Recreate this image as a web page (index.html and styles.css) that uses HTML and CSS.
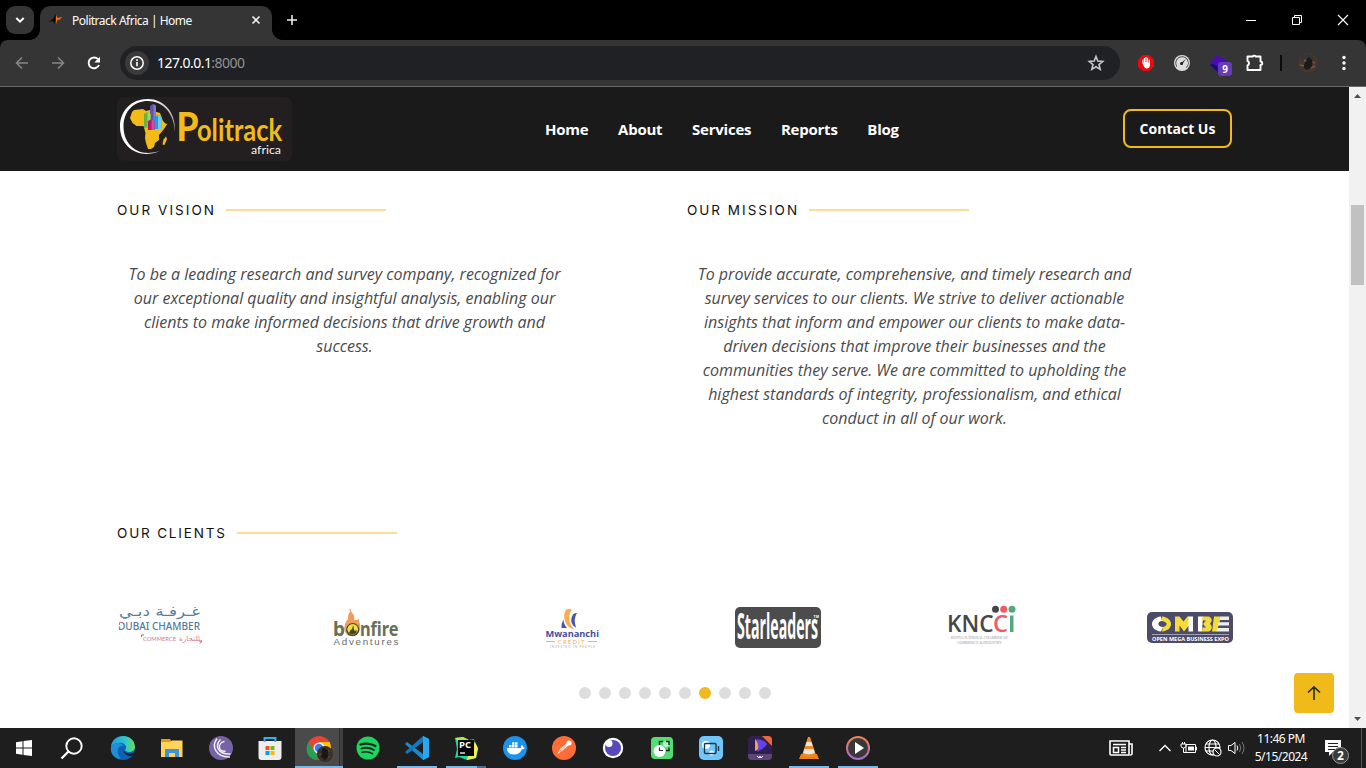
FILE: index.html
```html
<!DOCTYPE html>
<html lang="en">
<head>
<meta charset="utf-8">
<title>Politrack Africa | Home</title>
<link rel="stylesheet" href="styles.css">
</head>
<body>
<div class="tabstrip">
  <div class="tab-search"><svg width="28" height="28" viewBox="0 0 28 28"><path d="M10.3 12l3.7 3.7 3.7-3.7" fill="none" stroke="#fff" stroke-width="2"/></svg></div>
  <div class="tab">
    <svg class="favicon" width="16" height="16" viewBox="0 0 16 16"><path d="M0 10l5-3 2.500-5v6l-1.500 4-1-3z" fill="#0b0b0b"/><path d="M8 12V3l1.500 3L14.500 5l-3.500 3-1.500-.5z" fill="#f37021"/></svg>
    <span class="tab-title">Politrack Africa | Home</span>
    <svg class="tab-close" width="10" height="10" viewBox="0 0 10 10"><path d="M1.500 1.500l7 7M8.500 1.500l-7 7" stroke="#eee" stroke-width="1.600"/></svg>
  </div>
  <svg class="new-tab" width="12" height="12" viewBox="0 0 12 12"><path d="M6 1v10M1 6h10" stroke="#eee" stroke-width="1.600"/></svg>
  <div class="window-buttons">
    <svg width="46" height="40" viewBox="0 0 46 40"><path d="M18 20.500h10" stroke="#fff"/></svg>
    <svg width="46" height="40" viewBox="0 0 46 40"><path d="M18.500 17.500h7v7h-7zM20.500 17v-1.500h7v7h-1.500" fill="none" stroke="#fff"/></svg>
    <svg width="46" height="40" viewBox="0 0 46 40"><path d="M18 15l10 10M28 15l-10 10" stroke="#fff" stroke-width="1.100"/></svg>
  </div>
</div>
<div class="toolbar">
  <svg class="nav-icon" width="36" height="36" viewBox="0 0 36 36"><path d="M24 18H13M18 12.500L12.500 18l5.500 5.500" fill="none" stroke="#858585" stroke-width="1.600"/></svg>
  <svg class="nav-icon" width="36" height="36" viewBox="0 0 36 36"><path d="M12 18h11M18 12.500l5.500 5.500-5.500 5.500" fill="none" stroke="#858585" stroke-width="1.600"/></svg>
  <svg class="nav-icon" width="36" height="36" viewBox="0 0 36 36"><path d="M23 20a5.400 5.400 0 1 1-1-5.800" fill="none" stroke="#fff" stroke-width="1.900"/><path d="M24 11.800v5.700h-5.700z" fill="#fff"/></svg>
  <div class="address">
    <svg class="site-info" width="24" height="24" viewBox="0 0 24 24"><circle cx="12" cy="12" r="12" fill="#3a3a3b"/><circle cx="12" cy="12" r="6.200" fill="none" stroke="#fff" stroke-width="1.500"/><path d="M12 11v4.300M12 8.300v1.600" stroke="#fff" stroke-width="1.600"/></svg>
    <span class="url">127.0.0.1<span class="port">:8000</span></span>
    <svg class="bookmark" width="18" height="18" viewBox="0 0 18 18"><path d="M9 2.500l1.800 4.600 4.900.4-3.700 3.100 1.200 4.800L9 12.800l-4.200 2.600L6 10.600 2.300 7.500l4.900-.4z" fill="none" stroke="#c7c7c7" stroke-width="1.600"/></svg>
  </div>
  <div class="extensions">
    <svg width="36" height="36" viewBox="0 0 36 36"><path d="M14.700 10h6.600l4.700 4.700v6.600L21.300 26h-6.600L10 21.300v-6.600z" fill="#e60b12"/><path d="M14.400 18v-3.500h1V17l.5 1v-5h1.100v4h.4v-5h1.200v5h.4v-4.300h1.100V17l.5 1 .2-3.500h1.200v5q0 4-3.500 4-2.200 0-4.100-5.500z" fill="#fff"/></svg>
    <svg width="36" height="36" viewBox="0 0 36 36"><circle cx="18" cy="18" r="8" fill="#ddd"/><circle cx="18" cy="18" r="6.300" fill="none" stroke="#555" stroke-width="1" stroke-dasharray="28 12" transform="rotate(145 18 18)"/><path d="M16.500 18.800l5.200-4.800-3.700 6z" fill="#222"/><circle cx="17.500" cy="18.600" r="1.500" fill="#222"/></svg>
    <svg width="36" height="36" viewBox="0 0 36 36"><path d="M10 20l8-5 8 5-8 7z" fill="#1c0877"/><path d="M10 17l8-7 8 6-8 6z" fill="#4b0ab5"/><rect x="18" y="17" width="14" height="14" rx="3" fill="#673ab7"/><text x="25" y="28" class="badge-number">9</text></svg>
    <svg width="36" height="36" viewBox="0 0 36 36"><path d="M11.500 11.500h5.300a1.700 1.700 0 0 1 3 0h4.700v5a1.600 1.600 0 0 1 0 3.500v5h-13v-4.500a2.400 2.400 0 0 0 0-4.500z" fill="none" stroke="#fff" stroke-width="1.900" stroke-linejoin="round"/></svg>
  </div>
  <div class="divider"></div>
  <svg class="profile" width="20" height="20" viewBox="0 0 20 20"><circle cx="10" cy="10" r="10" fill="#46362d"/><path d="M3 4l7-3 7 4-3 2-5-2-5 4z" fill="#2e373a"/><path d="M9 6l2-2 3 3v7l-5 3-4-3z" fill="#191919"/><path d="M2 12l4 1M13 15l4-2M6 7l2 1M15 9l2 1" stroke="#7a5840" stroke-width="1.500"/></svg>
  <svg class="menu" width="6" height="16" viewBox="0 0 6 16"><circle cx="3" cy="2.500" r="1.700" fill="#fff"/><circle cx="3" cy="8" r="1.700" fill="#fff"/><circle cx="3" cy="13.500" r="1.700" fill="#fff"/></svg>
</div>
<div class="viewport">
  <div class="page">
    <header class="site-header">
      <svg class="brand" width="175" height="64" viewBox="0 0 175 64">
        <defs><linearGradient id="ring" x1="0" y1="0" x2="1" y2="0"><stop offset=".6" stop-color="#fff"/><stop offset="1" stop-color="#fff" stop-opacity=".6"/></linearGradient></defs>
        <rect width="175" height="64" rx="6" fill="#231f20"/>
        <path d="M58 35C59 14 46 2 31 2 14 2 3 14 3 29.500 3 46 15 57 30 57q7 0 13-3-6 2-12 2C17 56 6.500 45 6.500 29.500S17 4 31 4c14 0 26 11 27 31z" fill="url(#ring)"/>
        <path d="M17 13l9-1 3 2 4-1 10 3 3 8 3 3 1.500-.5L47 32l-5 6v5l-4 3-1 4-3 2h-3l-2-6-1-5 .5-5-2-7-7 0-4-3-2.500-5 2-6z" fill="#f1bb18"/><path d="M49 39.500l1 2.500-2.500 6-2-.5 1-5z" fill="#f1bb18"/>
        <path d="M33 9l3-2 3 2v19h-6z" fill="#6455ac"/><path d="M36.500 7l2.500 2v19h-2.500z" fill="#827ac7"/><path d="M27 17l3.500-2 3 2v13l-6.500 1z" fill="#6ab23f"/><path d="M30.500 15l3 2v13h-3z" fill="#a1d867"/><path d="M37 20l4-2 3.500 2v12H37z" fill="#249bdc"/><path d="M41 18l3.500 2v12H41z" fill="#6cccf4"/><path d="M31 24l3.500-2 3 2v9H31z" fill="#b11777"/><path d="M34.500 22l3 2v9h-3z" fill="#da49a0"/>
        <text x="59.500" y="44" textLength="22" lengthAdjust="spacingAndGlyphs" class="logo-p">P</text>
        <text x="80" y="44" textLength="85" lengthAdjust="spacingAndGlyphs" class="logo-rest">olitrack</text>
        <text x="134" y="56.500" textLength="30" lengthAdjust="spacingAndGlyphs" class="logo-sub">africa</text>
      </svg>
      <nav class="site-nav"><a>Home</a><a>About</a><a>Services</a><a>Reports</a><a>Blog</a></nav>
      <a class="contact">Contact Us</a>
    </header>
    <main class="content">
      <section class="statements">
        <article>
          <h2 class="heading"><span class="w-vision">OUR VISION</span></h2>
          <p class="statement">To be a leading research and survey company, recognized for our exceptional quality and insightful analysis, enabling our clients to make informed decisions that drive growth and success.</p>
        </article>
        <article>
          <h2 class="heading"><span class="w-mission">OUR MISSION</span></h2>
          <p class="statement">To provide accurate, comprehensive, and timely research and survey services to our clients. We strive to deliver actionable insights that inform and empower our clients to make data-driven decisions that improve their businesses and the communities they serve. We are committed to upholding the highest standards of integrity, professionalism, and ethical conduct in all of our work.</p>
        </article>
      </section>
      <section>
        <h2 class="heading"><span class="w-clients">OUR CLIENTS</span></h2>
        <div class="clients">
          <svg width="86" height="46" viewBox="0 0 86 46">
            <text x="2" y="12" textLength="81" lengthAdjust="spacingAndGlyphs" font-size="13.500" fill="#557d96" direction="rtl" text-anchor="end" class="arabic">غـرفـة دبـي</text>
            <text x="1" y="26" textLength="82" lengthAdjust="spacingAndGlyphs" font-size="11" fill="#547995" class="dubai">DUBAI CHAMBER</text><path d="M1 17.500h3v5H1z" fill="#fff"/><path d="M2.500 21v-2.500h3" stroke="#df6371" fill="none"/>
            <text x="26" y="37" textLength="33" lengthAdjust="spacingAndGlyphs" font-size="5.800" fill="#cf7c87" class="sans">COMMERCE</text>
            <text x="62" y="37" textLength="21" lengthAdjust="spacingAndGlyphs" font-size="7" fill="#cf7c87" direction="rtl" text-anchor="end" class="arabic">للتجارة</text>
            <path d="M24.500 33v-2H27M82 37h3l-2 2.500" stroke="#c95668" fill="none"/>
          </svg>
          <svg width="86" height="46" viewBox="0 0 86 46">
            <path d="M24 31q-4-5-2-11 1-3 3-5 0-6 2-7-1-2 0-4 1 4 3 6 2 2 1 6l3 0 2-1q0 3 1 5 1 4-1 8-5 6-12 3z" fill="#ef9c5d"/>
            <text x="10" y="31.700" textLength="12" lengthAdjust="spacingAndGlyphs" font-size="20" class="heavy" fill="#697059">b</text>
            <circle cx="29.700" cy="25.700" r="6.600" fill="#4e462d"/><circle cx="29.700" cy="25.200" r="5.300" fill="#efe342"/><path d="M26 29l2-4 1 1 1-5 1.500 6 2-1v3q-4 2.500-7.500 0z" fill="#49432e"/>
            <text x="37" y="31.700" textLength="38.500" lengthAdjust="spacingAndGlyphs" font-size="19.500" class="heavy" fill="#697059">nfire</text>
            <text x="10.500" y="41" textLength="65" font-size="9.800" fill="#6c6c6c" class="thin">Adventures</text>
          </svg>
          <svg width="86" height="46" viewBox="0 0 86 46">
            <path d="M37 5.500q3-.8 6 0-4 6-2.500 12 1 4 4.500 7.500-6-1-8.500-6.500Q33.500 12 37 5.500z" fill="#fcac50"/><path d="M44 10.500q1.500-2 4-1.500-4 6-1 14.500-4-2-4.700-6-.4-4 1.700-7zM34.500 15.500q0 4.500 3.500 8.500h-5.500q-.5-4.500 2-8.500z" fill="#4a55a6"/>
            <text x="16.500" y="33" textLength="53.500" lengthAdjust="spacingAndGlyphs" font-size="9.300" class="bold" fill="#434c9c">Mwananchi</text>
            <text x="29" y="39.700" textLength="26.500" font-size="5.500" fill="#f5a552" class="sans">CREDIT</text><path d="M17 37.500h9M59 37.500h9" stroke="#b8b8ca"/>
            <text x="21" y="43.500" textLength="45" font-size="3" fill="#aaaab2" class="sans">INVESTED IN PEOPLE</text>
          </svg>
          <svg width="86" height="46" viewBox="0 0 86 46"><rect y="3" width="86" height="41" rx="5" fill="#4c4c4c"/><text x="2" y="34.500" textLength="81" lengthAdjust="spacingAndGlyphs" font-size="35" fill="#fff" class="star">Starleaders</text><text x="78.500" y="14" textLength="5.500" font-size="3.500" fill="#fff" class="bold">TM</text></svg>
          <svg width="86" height="46" viewBox="0 0 86 46">
            <circle cx="54.500" cy="5.300" r="3.500" fill="#454545"/><circle cx="62.700" cy="5.300" r="3.500" fill="#ef5c68"/><circle cx="71" cy="5.300" r="3.500" fill="#4fac79"/>
            <text x="6" y="28" textLength="46.500" lengthAdjust="spacingAndGlyphs" font-size="23" class="kncci" fill="#464646">KNC</text><text x="52" y="28" textLength="15" lengthAdjust="spacingAndGlyphs" font-size="23" class="kncci" fill="#ef5c68">C</text><path d="M69 11.500h3.500V28H69z" fill="#4fac79"/>
            <text x="10" y="34.500" textLength="57" font-size="3.800" fill="#999" class="tiny">KENYA NATIONAL CHAMBER OF</text><text x="16" y="39.800" textLength="45" font-size="3.800" fill="#999" class="tiny">COMMERCE &amp; INDUSTRY</text>
          </svg>
          <svg width="86" height="46" viewBox="0 0 86 46">
            <rect y="8" width="86" height="31" rx="5" fill="#4c4b68"/>
            <path d="M14 12.500C2 13.500 2 26.500 14 27.500l2-4.500c-6 0-6-6-1-6z" fill="#fff"/><path d="M15 12.500c12 1 12 14 0 15l1-4.500c5-1 5-5-1-6z" fill="#f3db3b"/>
            <path d="M28 12.500h4.500l4 5 4-5h1.500v9l-5 6-4.500-6v6H28z" fill="#f3db3b"/><path d="M41.500 12.500H46v15h-4.500zM51 12.500h5l-1 15h-4z" fill="#fff"/>
            <path d="M55.500 12.500h6.500q5 3 1 7 4 5-1 8h-7l.5-4h3.500l-3-3.500 3-3.500h-4zM67 12.500h7l-4 15h-5z" fill="#f3db3b"/><path d="M73.500 12.500H82V16h-9.500zM71.500 18.300H82v3.300h-11zM70.500 24H82v3.500H69.500z" fill="#eee"/>
            <path d="M5 30.500h77" stroke="#b9b8c7" stroke-width=".8"/><text x="5" y="37" textLength="77" lengthAdjust="spacingAndGlyphs" font-size="6" class="bold" fill="#fff">OPEN MEGA BUSINESS EXPO</text>
          </svg>
        </div>
        <div class="dots"><i></i><i></i><i></i><i></i><i></i><i></i><i class="active"></i><i></i><i></i><i></i></div>
      </section>
    </main>
    <a class="back-top"><svg width="16" height="18" viewBox="0 0 16 18"><path d="M8 16V3M2 8.500L8 2.800l6 5.700" fill="none" stroke="#222b12" stroke-width="1.600"/></svg></a>
  </div>
  <div class="scrollbar">
    <svg width="17" height="17" viewBox="0 0 17 17"><path d="M5 11l3.500-4L12 11z" fill="#505050"/></svg>
    <div class="thumb"></div>
    <svg class="down" width="17" height="17" viewBox="0 0 17 17"><path d="M5 6l3.500 4L12 6z" fill="#505050"/></svg>
  </div>
</div>
<footer class="taskbar">
  <div class="slot"><svg width="24" height="24" viewBox="0 0 24 24"><path d="M4 6.200l6.500-1v6.300H4zM11.500 5L20 4v7.500h-8.500zM4 12.500h6.500v6.300L4 17.800zM11.500 12.500H20V20l-8.500-1z" fill="#fff"/></svg></div>
  <div class="slot search"><svg width="24" height="24" viewBox="0 0 24 24"><circle cx="14" cy="10" r="7.700" fill="none" stroke="#fff" stroke-width="1.900"/><path d="M8.500 15.500L1.500 22.500" stroke="#fff" stroke-width="2.300"/></svg></div>
  <div class="slot"><svg width="24" height="24" viewBox="0 0 24 24"><defs><linearGradient id="eg"><stop stop-color="#219ee0"/><stop offset=".55" stop-color="#2bc3d2"/><stop offset="1" stop-color="#63df5d"/></linearGradient></defs><circle cx="12" cy="12" r="12" fill="#0b62b1"/><path d="M0 11C1-3 23-4 24 11c0 6-9 6-10 3 2-2 1-6-3-7C6 6 2 8 0 11z" fill="url(#eg)"/><path d="M0 11c4-5 10-5 13-1-6-2-9 6-3 13C3 23-1 17 0 11z" fill="#1e8ddb"/><path d="M13.500 11c-2 3 0 6 4 6.500 3 0 5-.5 6-1.500l-2 3.500c-6 2-11-4-8-8.500z" fill="#1e1e1e"/></svg></div>
  <div class="slot"><svg width="24" height="24" viewBox="0 0 24 24"><path d="M1 3h9l2 3H1z" fill="#e69b0b"/><path d="M1 6h9l2-1.500h10.500V21H1z" fill="#ffd35c"/><path d="M5 21v-8h14v8h-4v-4H9v4z" fill="#3c93d5"/></svg></div>
  <div class="slot"><svg width="24" height="24" viewBox="0 0 24 24"><circle cx="12" cy="12" r="12" fill="#7663a5"/><g fill="none" stroke="#eee" stroke-width="1.500"><path d="M8 2.500c-6 8-1 19 13 18.500"/><path d="M11.500 3.500c-6 6-3 15 10 14.500"/><path d="M15.500 5.500c-7 1-7 11 1 9.500"/></g></svg></div>
  <div class="slot"><svg width="24" height="24" viewBox="0 0 24 24"><path d="M.5 5h23v16q0 3-3 3h-17q-3 0-3-3z" fill="#eee"/><path d="M6.500 6V2h11v4" fill="none" stroke="#29b6f1" stroke-width="1.900"/><path d="M7.500 10h4v4h-4z" fill="#f15022"/><path d="M12.500 10h4v4h-4z" fill="#7fbb00"/><path d="M7.500 15h4v4h-4z" fill="#00a3ee"/><path d="M12.500 15h4v4h-4z" fill="#ffb900"/></svg></div>
  <div class="slot current"><svg class="overflowing" width="24" height="24" viewBox="0 0 24 24"><circle cx="12" cy="12" r="12" fill="#e84335"/><path d="M1.600 6L7 15l5 3-3 6C-1 22-2 12 1.600 6z" fill="#28a052"/><path d="M12 6h10.400c4 7 0 18-10.400 18l5-9z" fill="#fbc116"/><circle cx="12" cy="12" r="5.500" fill="#fff"/><circle cx="12" cy="12" r="4.300" fill="#3b7df0"/><circle cx="18" cy="18" r="8" fill="#38302a"/><path d="M15 13l3-1 3 3v6l-3 3-4-3z" fill="#171717"/><path d="M12 19l3-1M21 14l2 2M21 22l2-2" stroke="#654b3a"/></svg></div>
  <div class="slot"><svg width="24" height="24" viewBox="0 0 24 24"><circle cx="12" cy="12" r="11.500" fill="#1ed35e"/><g fill="none" stroke="#182820" stroke-linecap="round"><path d="M4.500 8.500q8-2.500 15 1.500" stroke-width="2.200"/><path d="M5.500 12.500q6.500-2 12.500 1.500" stroke-width="1.800"/><path d="M6 16.200q5.500-1.600 10.500 1.400" stroke-width="1.500"/></g></svg></div>
  <div class="slot open"><svg width="24" height="24" viewBox="0 0 24 24"><path d="M18 0l6 3v18l-6 3L0 8l2-2 16 12z" fill="#168cd1"/><path d="M18 0v6L2 18l-2-2z" fill="#1478be"/><path d="M18 0l6 3v18l-6 3z" fill="#29a8ef"/></svg></div>
  <div class="slot open split"><svg width="24" height="24" viewBox="0 0 24 24"><path d="M1 2l8-1 6 3 5-1 1 5 3 5-2 9-9 2-8-3-4 1 2-9z" fill="#20d69a"/><path d="M1 2l8-1 6 3-7 6z" fill="#a3ee53"/><path d="M21 6l3 6-2 10-9 2 3-11z" fill="#f0ed57"/><path d="M4 4h16v16H4z" fill="#080808"/><text x="5" y="12" textLength="12" lengthAdjust="spacingAndGlyphs" font-size="9" fill="#fff" class="bold">PC</text><path d="M6 17h5" stroke="#fff" stroke-width="1.300"/></svg></div>
  <div class="slot"><svg width="24" height="24" viewBox="0 0 24 24"><circle cx="12" cy="12" r="12" fill="#1d91ee"/><path d="M4 12h14q-.5-2 .8-3.200 1.600 1.200 1.600 2.700l1.600.2q-1 1.800-3.200 1.800-2 5-8 5-7 0-6.800-6.500zM6 9h2.500v2.500H6zM9 9h2.500v2.500H9zM12 9h2.500v2.500H12zM9 6.300h2.500v2.400H9zM12 6.300h2.500v2.400H12z" fill="#fff"/></svg></div>
  <div class="slot"><svg width="24" height="24" viewBox="0 0 24 24"><circle cx="12" cy="12" r="12" fill="#ff6c37"/><path d="M5.500 18l2.500-5 7-6 2 2-6.500 5.500z" fill="#fff"/><circle cx="17" cy="7" r="2.500" fill="#fff"/><path d="M8 15l6-5" stroke="#ff9875"/></svg></div>
  <div class="slot"><svg width="24" height="24" viewBox="0 0 24 24"><circle cx="12" cy="12" r="10.200" fill="#fff"/><circle cx="12" cy="12" r="8" fill="#5847bd"/><circle cx="8" cy="7.500" r="3.500" fill="#fff"/></svg></div>
  <div class="slot"><svg width="24" height="24" viewBox="0 0 24 24"><rect x="1" y="1" width="22" height="22" rx="4" fill="#54dc77"/><circle cx="16" cy="8" r="3" fill="#b8f3c2"/><path d="M9.500 9V5.500H13M16 5.500h3V9M19 11.500v3h-3" fill="none" stroke="#162d1c" stroke-width="1.400"/><circle cx="9.500" cy="15" r="6" fill="#fff"/><path d="M9.500 11.500v3H13" fill="none" stroke="#333" stroke-width="1.200"/></svg></div>
  <div class="slot"><svg width="24" height="24" viewBox="0 0 24 24"><rect width="24" height="24" rx="5" fill="#70c6fb"/><circle cx="7" cy="9" r="4" fill="#fff"/><circle cx="12.500" cy="17" r="2.500" fill="#fff"/><path d="M5.500 8.500q0-1 1-1H16q1 0 1 1v8q0 1-1 1H6.500q-1 0-1-1zM19.500 10v5" fill="none" stroke="#193847" stroke-width="1.400"/></svg></div>
  <div class="slot"><svg width="24" height="24" viewBox="0 0 24 24"><rect width="24" height="24" rx="4" fill="#302050"/><path d="M14 0h6q4 0 4 4v6z" fill="#f26832"/><path d="M7 3v12q5-2 5-6z" fill="#f4a248"/><path d="M8 3q9 1 11 5-2 4-10 8 3-6-1-13z" fill="#6542ed"/><path d="M0 18h24v2q0 4-4 4H4q-4 0-4-4z" fill="#5d4577"/><path d="M9 20l2 2 1-2 1 2 2-2" fill="none" stroke="#fff"/></svg></div>
  <div class="slot open"><svg width="24" height="24" viewBox="0 0 24 24"><path d="M4 18h16l2 5H2z" fill="#ef7f13"/><path d="M11 1h2l6 18q-7 4-14 0z" fill="#f08b23"/><path d="M9.700 6h4.700l1.300 4H8.400zM7.500 13h9l1.300 4q-6 2.500-11.500 0z" fill="#e7e7e7"/></svg></div>
  <div class="slot open"><svg width="24" height="24" viewBox="0 0 24 24"><defs><linearGradient id="pg" x2="0" y2="1"><stop stop-color="#ef8250"/><stop offset="1" stop-color="#a66bca"/></linearGradient></defs><circle cx="12" cy="12" r="11" fill="#383838" stroke="url(#pg)" stroke-width="2"/><path d="M9 6l9 6-9 6z" fill="#fff"/></svg></div>
  <div class="tray">
    <svg class="news" width="24" height="16" viewBox="0 0 24 16"><path d="M1 1h19v14H2q-1 0-1-1zM20 4h3v10q0 1-2 1" fill="none" stroke="#fff" stroke-width="1.600"/><path d="M4 4.500h13M12 7.500h5M12 10h5M12 12.500h5" stroke="#fff" stroke-width="1.300"/><path d="M4.500 7.500h5v5h-5z" fill="none" stroke="#fff" stroke-width="1.500"/></svg>
    <svg class="chevron" width="12" height="8" viewBox="0 0 12 8"><path d="M.5 7L6 1.500 11.500 7" fill="none" stroke="#fff" stroke-width="1.300"/></svg>
    <svg class="battery" width="16" height="12" viewBox="0 0 16 12"><path d="M5 2.500h9.500v8H5zM14.500 5h1v3h-1" fill="none" stroke="#fff"/><path d="M7 4.500h6v4H7z" fill="#fff"/><path d="M0 2h5v2q0 2-2.500 2T0 4zM1.500 0v2M3.500 0v2M2.500 6v4.500H5" fill="none" stroke="#fff"/></svg>
    <svg class="globe" width="18" height="18" viewBox="0 0 18 18"><g fill="none" stroke="#fff" stroke-width="1.200"><circle cx="8.500" cy="8.500" r="7.500"/><ellipse cx="8.500" cy="8.500" rx="3.500" ry="7.500"/><path d="M1 8.500h15M2 5h13M2 12h8"/></g><circle cx="13" cy="13" r="4" fill="#1e1e1e" stroke="#fff" stroke-width="1.200"/><path d="M10.500 10.500l5 5" stroke="#fff"/></svg>
    <svg class="volume" width="17" height="14" viewBox="0 0 17 14"><path d="M.5 4.500h2.500l4-3v11l-4-3H.5z" fill="none" stroke="#fff"/><path d="M9 4.500q1.500 2.500 0 5" fill="none" stroke="#fff"/><path d="M11.500 3q2.500 4 0 8M14 1q4 6 0 12" fill="none" stroke="#777"/></svg>
    <div class="clock"><span class="time">11:46 PM</span><span class="date">5/15/2024</span></div>
    <svg class="notice" width="26" height="26" viewBox="0 0 26 26"><path d="M1 5h16v12H9l-4 4v-4H1z" fill="#fff"/><path d="M4 8.500h10M4 11.500h10M4 14.500h7" stroke="#222"/><circle cx="16.500" cy="20.500" r="8" fill="#3b3b3b" stroke="#999"/><text x="16.500" y="24.700" class="notice-number">2</text></svg>
    <div class="desktop-edge"></div>
  </div>
</footer>
</body>
</html>
```
FILE: styles.css
```css
* { box-sizing: border-box; }
body { margin: 0; width: 1366px; height: 768px; overflow: hidden; display: flex; flex-direction: column; font-family: "Open Sans", sans-serif; background: #000; }
svg { display: block; flex: none; overflow: visible; }

.tabstrip { height: 40px; flex: none; display: flex; align-items: center; background: #000; padding-left: 6px; }
.tab-search { width: 28px; height: 28px; border-radius: 9px; background: #353536; }
.tab { position: relative; align-self: flex-end; width: 232px; height: 34px; margin-left: 6px; padding: 0 11px 6px 8px; background: #353536; border-radius: 10px 10px 0 0; display: flex; align-items: center; color: #fff; }
.tab::before, .tab::after { content: ""; position: absolute; bottom: 0; width: 10px; height: 10px; }
.tab::before { left: -10px; background: radial-gradient(circle at 0 0, transparent 9.500px, #353536 10px); }
.tab::after { right: -10px; background: radial-gradient(circle at 100% 0, transparent 9.500px, #353536 10px); }
.tab-title { margin-left: 8px; font: 12px "Noto Sans", sans-serif; letter-spacing: -.49px; white-space: nowrap; }
.tab-close { margin-left: auto; }
.new-tab { margin-left: 14px; }
.window-buttons { display: flex; margin-left: auto; }

.toolbar { height: 47px; flex: none; display: flex; align-items: center; padding: 0 19px 1px 4px; background: #353536; border-bottom: 1px solid #69696a; border-radius: 8px 8px 0 0; }
.address { width: 1000px; height: 34px; margin-left: 8px; padding: 0 15px 0 5px; border-radius: 17px; background: #202124; display: flex; align-items: center; }
.url { margin-left: 8px; color: #fff; font: 14px "Noto Sans", sans-serif; letter-spacing: -.55px; }
.port { color: #919191; }
.bookmark { margin-left: auto; }
.extensions { display: flex; margin-left: 8px; }
.badge-number { font: bold 10px "Open Sans", sans-serif; fill: #fff; text-anchor: middle; }
.divider { width: 2px; height: 16px; margin-left: 8px; background: #0c0c0c; }
.profile { margin-left: 16px; }
.menu { margin-left: auto; }

.viewport { height: 641px; flex: none; display: flex; background: #fff; }
.page { position: relative; flex: 1; display: flex; flex-direction: column; }
.site-header { height: 84px; flex: none; display: flex; align-items: center; padding: 0 117px; background: #1a1a1a; color: #fff; }
.site-nav { display: flex; gap: 29.700px; margin-left: 253px; font-size: 15px; font-weight: 700; letter-spacing: -.24px; }
.contact { width: 109px; height: 39px; margin: 0 0 2px auto; display: flex; align-items: center; justify-content: center; border: 2px solid #f1ba1b; border-radius: 8px; font-size: 14px; font-weight: 700; }
.logo-p { font: 900 40px Lato, sans-serif; fill: #f1bb18; }
.logo-rest { font: bold 30px Lato, sans-serif; fill: #f1bb18; }
.logo-sub { font: 12px Lato, sans-serif; fill: #f2f2f2; }

.content { padding: 29px 116px 0 117px; }
.statements { display: grid; grid-template-columns: 570px 1fr; height: 323px; }
.heading { display: flex; align-items: center; height: 20px; margin: 0; color: #111; font: 400 13.500px/20px Inter, sans-serif; white-space: nowrap; }
.heading::after { content: ""; width: 160px; height: 2px; background: #fbdd95; }
.w-vision { width: 109px; letter-spacing: 2.050px; }
.w-mission { width: 122px; letter-spacing: 2px; }
.w-clients { width: 120px; letter-spacing: 1.820px; }
.statement { width: 455px; margin: 42px 0 0; color: #4a4a4a; font-size: 16px; line-height: 24px; font-style: italic; text-align: center; }
.clients { display: flex; justify-content: space-between; margin-top: 61px; }
.sans { font-family: Lato, sans-serif; }
.dubai { font-family: "Noto Sans", sans-serif; font-weight: 500; }
.arabic { font-family: "DejaVu Sans", sans-serif; }
.bold { font-family: "Open Sans", sans-serif; font-weight: 700; }
.heavy { font-family: "Noto Sans", sans-serif; font-weight: 700; }
.thin { font-family: "Liberation Sans", sans-serif; }
.star { font-family: "Open Sans", sans-serif; font-weight: 700; }
.kncci { font-family: "Open Sans", sans-serif; font-weight: 600; }
.tiny { font-family: "Liberation Serif", serif; }
.dots { display: flex; justify-content: center; gap: 8px; margin-top: 37px; }
.dots i { width: 12px; height: 12px; border-radius: 50%; background: #ddd; }
.dots .active { background: #f1ba1b; }
.back-top { position: absolute; right: 15px; bottom: 15px; width: 40px; height: 40px; display: flex; align-items: center; justify-content: center; border-radius: 4px; background: #f1ba1b; }
.scrollbar { width: 17px; display: flex; flex-direction: column; background: #f1f1f1; }
.thumb { width: 13px; height: 80px; margin: 101px 2px 0; background: #c1c1c1; }
.down { margin-top: auto; }

.taskbar { height: 40px; flex: none; display: flex; gap: 1px; background: #1e1e1e; color: #fff; }
.slot { width: 48px; height: 40px; flex: none; display: flex; align-items: center; justify-content: center; }
.search { width: 49px; padding-right: 3px; }
.slot.current { background: linear-gradient(90deg, #4a4a4a 44px, #303030 44px, #303030 45px, #404040 45px); border-bottom: 2px solid #76b9ed; }
.current .overflowing { margin-top: 2px; }
.slot.open { background: linear-gradient(#76b9ed, #76b9ed) center bottom / 40px 2px no-repeat; }
.slot.split { background: linear-gradient(90deg, #76b9ed 31px, #476e8f 31px) center bottom / 40px 2px no-repeat; }
.tray { flex: 1; display: flex; align-items: center; }
.news { margin-left: 226px; }
.chevron { margin-left: 26px; }
.battery { margin-left: 10px; }
.globe { margin-left: 7px; }
.volume { margin-left: 6px; }
.clock { width: 56px; margin-left: 8px; display: flex; flex-direction: column; align-items: center; font: 12px/18px "Noto Sans", sans-serif; white-space: nowrap; }
.time { letter-spacing: -.5px; }
.date { letter-spacing: -.5px; }
.notice { margin-left: 15px; }
.notice-number { font: bold 12px "Open Sans", sans-serif; fill: #fff; text-anchor: middle; }
.desktop-edge { width: 1px; height: 40px; margin-left: auto; margin-right: 4px; background: #555; }
```
